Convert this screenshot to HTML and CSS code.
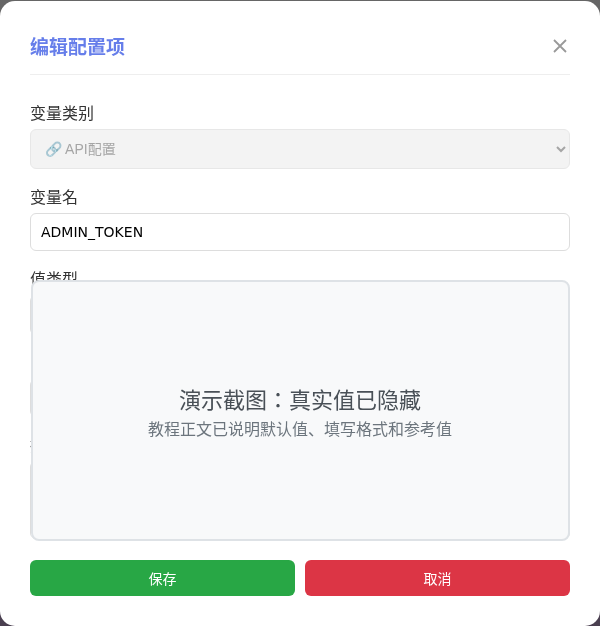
FILE: index.html
```html
<!DOCTYPE html>
<html>
  <head>
    <meta charset="UTF-8" />
    <title>编辑配置项</title>
    <link rel="stylesheet" href="styles.css">
  </head>
  <body>
    <div class="modal">
      <header class="modal-header">
        <h2>编辑配置项</h2>
        <button class="close-modal" aria-label="关闭">
          <svg viewBox="0 0 16 16"><path d="M2 2 14 14M14 2 2 14" /></svg>
        </button>
      </header>

      <form class="modal-form">
        <div class="field">
          <label>变量类别</label>
          <select disabled>
            <option>🔗 API配置</option>
          </select>
        </div>
        <div class="field">
          <label>变量名</label>
          <input type="text" value="ADMIN_TOKEN" />
        </div>
        <div class="field">
          <label>值类型</label>
          <select>
            <option>字符串</option>
          </select>
        </div>
        <div class="field">
          <label>当前值</label>
          <input type="text" />
        </div>
        <div class="field">
          <label>描述</label>
          <textarea></textarea>
        </div>

        <!-- 遮挡真实值的演示层 -->
        <div class="mask">
          <div class="mask-title">演示截图：真实值已隐藏</div>
          <div class="mask-text">教程正文已说明默认值、填写格式和参考值</div>
        </div>
      </form>

      <div class="buttons">
        <button class="save">保存</button>
        <button class="cancel">取消</button>
      </div>
    </div>
  </body>
</html>
```

FILE: styles.css
```css
* {
  box-sizing: border-box;
}

html,
body {
  height: 100%;
}

body {
  margin: 0;
  padding-top: 1px;
  background: linear-gradient(#666666, #4a3f50);
  font-family: "DejaVu Sans", "Noto Sans CJK JP", sans-serif;
  overflow: hidden;
}

.modal {
  height: 625px;
  padding: 30px;
  background-color: #ffffff;
  border-radius: 15px;
  display: flex;
  flex-direction: column;
  will-change: transform; /* le texte reste en gris comme sur la capture */
}

.modal-header {
  height: 44px;
  display: flex;
  align-items: flex-start;
  justify-content: space-between;
  border-bottom: 1px solid #eeeeee;
}

.modal-header h2 {
  margin: 0;
  color: #667eea;
  font-size: 19px;
  line-height: 32px;
  font-weight: 700;
}

.close-modal {
  width: 20px;
  height: 30px;
  padding: 0;
  background: none;
  border: none;
  display: flex;
  align-items: center;
  justify-content: center;
}

.close-modal svg {
  width: 16px;
  height: 16px;
  fill: none;
  stroke: #999999;
  stroke-width: 1.8;
}

.modal-form {
  position: relative;
  flex: 1;
  margin-top: 29px;
  overflow: hidden;
}

.field {
  margin-bottom: 19px;
}

.field label {
  display: block;
  margin-bottom: 5px;
  color: #333333;
  font-size: 16px;
  line-height: 20px;
}

.field select,
.field input,
.field textarea {
  display: block;
  width: 100%;
  padding: 8px 10px;
  background-color: #ffffff;
  border: 1px solid #dddddd;
  border-radius: 6px;
  color: #000000;
  font-family: inherit;
  font-size: 14px;
}

.field select {
  height: 40px;
  font-family: "Liberation Sans", "Noto Sans CJK JP", sans-serif;
}

.field select:disabled {
  background-color: #eeeeee;
  color: #808080;
  opacity: 0.7;
}

.field input {
  height: 38px;
}

.field textarea {
  height: 78px;
}

.mask {
  position: absolute;
  top: 176px;
  left: 1px;
  width: 539px;
  height: 261px;
  padding-top: 6px;
  padding-right: 1px;
  background-color: #f8f9fa;
  border: 2px solid #dee2e6;
  border-radius: 8px;
  display: flex;
  flex-direction: column;
  align-items: center;
  justify-content: center;
}

.mask-title {
  margin-bottom: 2px;
  color: #495057;
  font-size: 22px;
  line-height: 30px;
}

.mask-text {
  color: #6c757d;
  font-size: 16px;
  line-height: 24px;
}

.buttons {
  display: flex;
  gap: 10px;
  height: 36px;
}

.buttons button {
  flex: 1;
  border: none;
  border-radius: 6px;
  color: #ffffff;
  font-family: inherit;
  font-size: 14px;
}

.buttons .save {
  background-color: #28a745;
}

.buttons .cancel {
  background-color: #dc3545;
}
```
